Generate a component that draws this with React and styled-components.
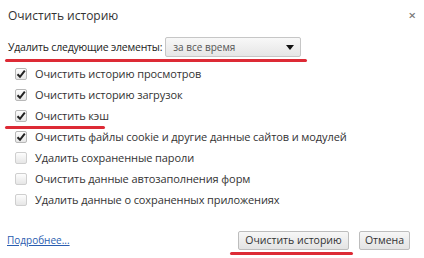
import React from 'react';
import styled, { createGlobalStyle } from 'styled-components';

const GlobalStyle = createGlobalStyle`
  html, body { margin: 0; padding: 0; background: #fff; }
  body { font-family: "Open Sans", "Noto Sans", sans-serif; color: #333; }
`;

const items = [
  { label: 'Очистить историю просмотров', checked: true },
  { label: 'Очистить историю загрузок', checked: true },
  { label: 'Очистить кэш', checked: true, mark: 100 },
  { label: 'Очистить файлы cookie и другие данные сайтов и модулей', checked: true },
  { label: 'Удалить сохраненные пароли', checked: false },
  { label: 'Очистить данные автозаполнения форм', checked: false },
  { label: 'Удалить данные о сохраненных приложениях', checked: false },
];

const App = () => (
  <Dialog>
    <GlobalStyle />
    <Header>
      <Title>Очистить историю</Title>
      <Close>×</Close>
    </Header>

    <PeriodRow>
      <Label>Удалить следующие элементы:</Label>
      <Select>
        <span>за все время</span>
        <Arrow />
      </Select>
      <Underline $left={5} $width={302} $bottom={-5} />
    </PeriodRow>

    <List>
      {items.map((it, i) => (
        <Item key={i}>
          <Box $checked={it.checked}>
            {it.checked && (
              <svg width="10" height="10" viewBox="0 0 10 10">
                <path d="M1.5 5.2 L4 7.8 L8.8 1.6" fill="none" stroke="#222" strokeWidth="2" />
              </svg>
            )}
          </Box>
          <span>{it.label}</span>
          {it.mark && <Underline $left={5} $width={it.mark} $bottom={-3} />}
        </Item>
      ))}
    </List>

    <Footer>
      <Link href="#">Подробнее...</Link>
      <Buttons>
        <ButtonWrap>
          <Button $width={111}>Очистить историю</Button>
          <Underline $left={-8} $width={123} $bottom={-5} />
        </ButtonWrap>
        <Button $width={51}>Отмена</Button>
      </Buttons>
    </Footer>
  </Dialog>
);

export default App;

// CSS //
const Dialog = styled.div`
width: 424px;
height: 258px;
box-sizing: border-box;
display: flex;
flex-direction: column;
font-size: 11px;
`

const Header = styled.div`
display: flex;
justify-content: space-between;
align-items: center;
height: 30px;
padding: 0 8px 0 8px;
`

const Title = styled.div`
font-size: 12px;
color: #333;
`

const Close = styled.div`
font-size: 13px;
color: #777;
font-weight: 600;
`

const PeriodRow = styled.div`
position: relative;
display: flex;
align-items: center;
gap: 3px;
margin-top: 7px;
padding-left: 8px;
height: 20px;
color: #222;
`

const Label = styled.span`
font-size: 10.5px;
letter-spacing: -0.2px;
`

const Select = styled.div`
display: flex;
align-items: center;
justify-content: space-between;
width: 136px;
height: 20px;
box-sizing: border-box;
padding: 0 6px 0 7px;
border: 1px solid #c6c6c6;
border-radius: 2px;
background: linear-gradient(#f8f8f8, #e6e6e6);
font-size: 10px;
color: #555;
`

const Arrow = styled.span`
width: 0;
height: 0;
border-left: 4px solid transparent;
border-right: 4px solid transparent;
border-top: 5px solid #111;
`

const Underline = styled.div`
position: absolute;
left: ${p => p.$left}px;
bottom: ${p => p.$bottom}px;
width: ${p => p.$width}px;
height: 3px;
border-radius: 2px;
background: #dd2a35;
`

const List = styled.div`
display: flex;
flex-direction: column;
margin-top: 6px;
`

const Item = styled.div`
position: relative;
display: flex;
align-items: center;
gap: 8px;
height: 21px;
padding-left: 15px;
color: #333;
letter-spacing: -0.1px;
`

const Box = styled.span`
display: flex;
align-items: center;
justify-content: center;
width: 10px;
height: 10px;
border: 1px solid ${p => p.$checked ? '#b8b8b8' : '#cfcfcf'};
border-radius: 2px;
background: linear-gradient(#fdfdfd, #e6e6e6);
`

const Footer = styled.div`
display: flex;
justify-content: space-between;
align-items: center;
margin-top: auto;
height: 20px;
margin-bottom: 8px;
padding: 0 14px 0 7px;
`

const Link = styled.a`
color: #2a5db0;
text-decoration: underline;
font-size: 10px;
`

const Buttons = styled.div`
display: flex;
gap: 10px;
`

const ButtonWrap = styled.div`
position: relative;
`

const Button = styled.button`
width: ${p => p.$width}px;
height: 19px;
padding: 0;
font-family: inherit;
font-size: 10.5px;
color: #333;
border: 1px solid #bdbdbd;
border-radius: 2px;
background: linear-gradient(#f7f7f7, #e3e3e3);
`
